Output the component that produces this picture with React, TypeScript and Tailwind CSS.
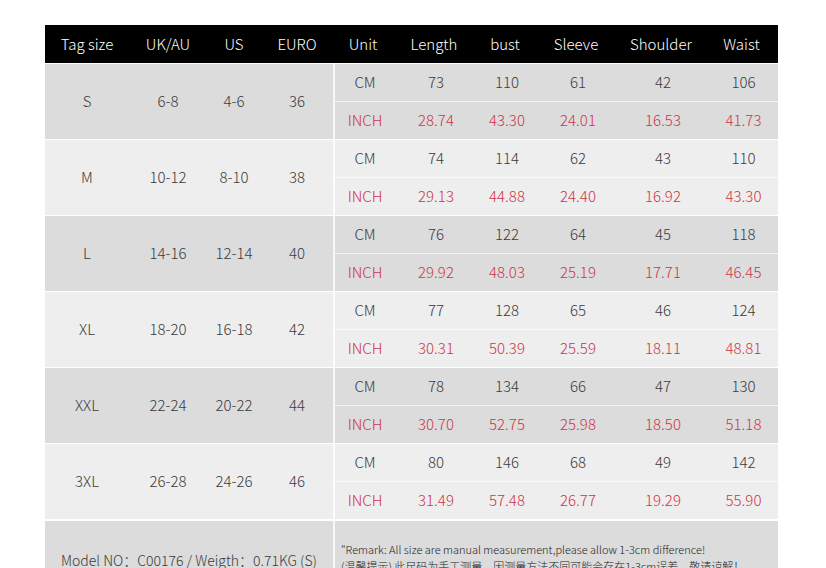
const leftCols = [
  { label: "Tag size", w: "w-[84px]" },
  { label: "UK/AU", w: "w-[78px]" },
  { label: "US", w: "w-[54px]" },
  { label: "EURO", w: "w-[72px]" },
];

const rightCols = [
  { label: "Unit", w: "w-[60px]" },
  { label: "Length", w: "w-[82px]" },
  { label: "bust", w: "w-[60px]" },
  { label: "Sleeve", w: "w-[82px]" },
  { label: "Shoulder", w: "w-[88px]" },
  { label: "Waist", w: "w-[73px]" },
];

const sizes = [
  { size: ["S", "6-8", "4-6", "36"], cm: ["73", "110", "61", "42", "106"], inch: ["28.74", "43.30", "24.01", "16.53", "41.73"] },
  { size: ["M", "10-12", "8-10", "38"], cm: ["74", "114", "62", "43", "110"], inch: ["29.13", "44.88", "24.40", "16.92", "43.30"] },
  { size: ["L", "14-16", "12-14", "40"], cm: ["76", "122", "64", "45", "118"], inch: ["29.92", "48.03", "25.19", "17.71", "46.45"] },
  { size: ["XL", "18-20", "16-18", "42"], cm: ["77", "128", "65", "46", "124"], inch: ["30.31", "50.39", "25.59", "18.11", "48.81"] },
  { size: ["XXL", "22-24", "20-22", "44"], cm: ["78", "134", "66", "47", "130"], inch: ["30.70", "52.75", "25.98", "18.50", "51.18"] },
  { size: ["3XL", "26-28", "24-26", "46"], cm: ["80", "146", "68", "49", "142"], inch: ["31.49", "57.48", "26.77", "19.29", "55.90"] },
];

function SubRow({ unit, values, red }: { unit: string; values: string[]; red?: boolean }) {
  const cells = [unit, ...values];
  return (
    <div className={`flex h-[37px] items-center ${red ? "text-[#cf3447]" : "text-[#3a3a3a]"}`}>
      {cells.map((v, i) => (
        <div key={i} className={`${rightCols[i].w} text-center`}>
          {v}
        </div>
      ))}
    </div>
  );
}

export default function App() {
  return (
    <div
      className="w-[826px] h-[568px] overflow-hidden bg-white pt-[25px] pl-[45px] text-[15px] font-light"
      style={{ fontFamily: '"Noto Sans CJK SC", "Noto Sans", sans-serif' }}
    >
      <div className="w-[733px] flex flex-col gap-[1px] bg-white">
        {/* Header */}
        <div className="flex h-[38px] items-center bg-black text-white">
          {[...leftCols, ...rightCols].map((c) => (
            <div key={c.label} className={`${c.w} text-center`}>
              {c.label}
            </div>
          ))}
        </div>

        {/* Size rows */}
        {sizes.map((row, idx) => (
          <div
            key={row.size[0]}
            className={`flex h-[75px] ${idx % 2 === 0 ? "bg-[#dcdcdc]" : "bg-[#eeeeee]"}`}
          >
            <div className="flex items-center text-[#3a3a3a]">
              {row.size.map((v, i) => (
                <div key={i} className={`${leftCols[i].w} text-center`}>
                  {v}
                </div>
              ))}
            </div>
            <div className="flex flex-col border-l-2 border-white/80">
              <SubRow unit="CM" values={row.cm} />
              <div className="h-px bg-white/70" />
              <SubRow unit="INCH" values={row.inch} red />
            </div>
          </div>
        ))}

        {/* Footer row */}
        <div className="flex h-[78px] bg-[#dcdcdc] mt-[1px]">
          <div className="w-[288px] flex items-center justify-center whitespace-nowrap text-[#3a3a3a] text-[14px]">
            Model NO：C00176 / Weigth：0.71KG (S)
          </div>
          <div className="flex-1 border-l-2 border-white/80 pl-[6px] pt-[20px] text-[11px] text-[#222] leading-[17px] whitespace-nowrap overflow-hidden">
            <p>"Remark: All size are manual measurement,please allow 1-3cm difference!</p>
            <p>(温馨提示) 此尺码为手工测量，因测量方法不同可能会存在1-3cm误差，敬请谅解！</p>
          </div>
        </div>
      </div>
    </div>
  );
}
